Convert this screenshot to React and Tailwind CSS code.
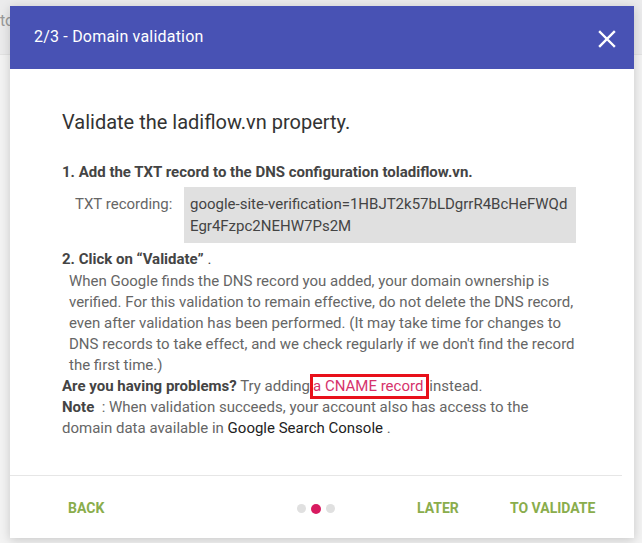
import React from "react";

export default function App() {
  return (
    <div className="relative w-[642px] h-[543px] overflow-hidden bg-[#f3f3f3] font-['Roboto',sans-serif]">
      <div className="h-[55px] bg-[#ebebec] border-b border-[#e2e2e2] pt-[9px] pl-0 text-[16px] text-[#9a9a9a]">to</div>

      <div className="absolute left-[10px] top-[6px] w-[624px] h-[532px] bg-white shadow-[0_2px_10px_rgba(0,0,0,0.18)] flex flex-col">
        <div className="h-[63px] shrink-0 bg-[#4852b4] flex items-center justify-between pl-[24px] pr-[17px]">
          <div className="text-white text-[16px] tracking-[0.2px] pb-[2px]">2/3 - Domain validation</div>
          <svg width="20" height="20" viewBox="0 0 20 20" className="mt-[2px]">
            <path d="M3 3 L17 17 M17 3 L3 17" stroke="white" strokeWidth="2.4" strokeLinecap="square" />
          </svg>
        </div>

        <div className="flex-1 pl-[52px] pr-[20px] pt-[39px] whitespace-nowrap">
          <div className="text-[20px] leading-[28px] text-[#333]">Validate the ladiflow.vn property.</div>

          <div className="mt-[26px] text-[15px] leading-[21px] font-bold text-[#444]">
            1. Add the TXT record to the DNS configuration toladiflow.vn.
          </div>

          <div className="mt-[4px] flex items-start">
            <div className="w-[122px] pl-[13px] pt-[6px] text-[15px] leading-[22px] text-[#666]">TXT recording:</div>
            <div className="w-[392px] bg-[#e0e0e0] px-[6px] py-[6px] text-[15px] leading-[22px] text-[#444]">
              google-site-verification=1HBJT2k57bLDgrrR4BcHeFWQd<br />Egr4Fzpc2NEHW7Ps2M
            </div>
          </div>

          <div className="mt-[6px] text-[15px] leading-[21px] text-[#444]">
            <span className="font-bold">2. Click on “Validate”</span> .
          </div>
          <div className="pl-[7px] pt-[1px] text-[15px] leading-[21px] text-[#666]">
            When Google finds the DNS record you added, your domain ownership is<br />
            verified. For this validation to remain effective, do not delete the DNS record,<br />
            even after validation has been performed. (It may take time for changes to<br />
            DNS records to take effect, and we check regularly if we don't find the record<br />
            the first time.)
          </div>
          <div className="text-[15px] leading-[21px] text-[#666]">
            <span className="font-bold text-[#444]">Are you having problems?</span> Try adding
            <span className="inline-block border-[3px] border-[#e8101a] leading-[19px] pl-[0px] pr-[3px] text-[#d6336c] -my-[3px]">a CNAME record</span>
            instead.
          </div>
          <div className="text-[15px] leading-[21px] text-[#666]">
            <span className="font-bold text-[#444]">Note</span>&nbsp; : When validation succeeds, your account also has access to the<br />
            domain data available in <span className="text-[#222]">Google Search Console</span> .
          </div>
        </div>

        <div className="h-px bg-[#e6e6e6] mr-[12px]" />

        <div className="h-[62px] shrink-0 flex items-center pl-[58px] pt-[3px] text-[14px] font-bold text-[#8aad4c]">
          <div className="w-[229px]">BACK</div>
          <div className="w-[120px] flex items-center gap-[5px]">
            <span className="w-[9px] h-[9px] rounded-full bg-[#e0e0e0]" />
            <span className="w-[10px] h-[10px] rounded-full bg-[#d81b60]" />
            <span className="w-[9px] h-[9px] rounded-full bg-[#e0e0e0]" />
          </div>
          <div className="w-[93px]">LATER</div>
          <div>TO VALIDATE</div>
        </div>
      </div>
    </div>
  );
}
